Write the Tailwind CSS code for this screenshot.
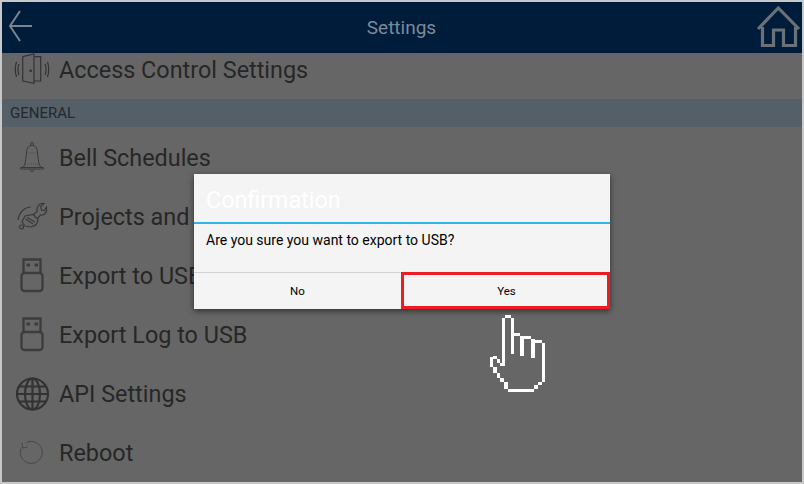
<!DOCTYPE html>
<html lang="en">
<head>
    <meta charset="UTF-8" />
    <title>Settings</title>
    <script src="https://cdn.jsdelivr.net/npm/@tailwindcss/browser@4"></script>
</head>
<body class="bg-[#c8c8c8] font-['Roboto',sans-serif]">
<div class="relative w-[804px] h-[484px] p-[2px] overflow-hidden">
    <div class="flex flex-col h-[480px] w-[800px] bg-[#666666] overflow-hidden">

        <!-- Top bar -->
        <header class="flex items-center justify-between h-[51px] shrink-0 bg-[#001c3b]">
            <svg class="w-10 h-[51px]" viewBox="0 0 40 51" fill="none" stroke="#7a8590" stroke-width="2">
                <path d="M18 9 L8 24 L18 39 M8 24 H30" />
            </svg>
            <span class="text-[19px] text-[#7d8a98] ml-[7px] pt-[2px]">Settings</span>
            <svg class="w-[48px] h-[51px]" viewBox="752 2 48 51" fill="none" stroke="#6b7178" stroke-width="3.200">
                <path d="M756 29 L776.300 8 L797 29 M760.500 27 V45.500 H771.500 V30 H781.500 V45.500 H793.500 V27" />
            </svg>
        </header>

        <!-- Settings list -->
        <div class="flex items-center h-[46px] pb-3 shrink-0 text-[23.400px] text-[#272727]">
            <div class="w-[57px] pl-[10px] flex">
                <svg class="w-10 h-10" viewBox="0 0 40 40" fill="none" stroke="#333" stroke-width="1.200">
                    <path d="M10.700 6.700 L22 4 V33.300 L10.700 31 Z M22 6.700 H28.700 V31 H22 M7 14 Q4.800 19 7 25 M4.500 12 Q2 19 4.500 27 M33 14 Q35.200 19 33 25 M35.500 12 Q38 19 35.500 27" />
                    <circle cx="18.700" cy="20.700" r=".7" fill="#333" />
                </svg>
            </div>
            <span class="pt-[2px]">Access Control Settings</span>
        </div>

        <div class="flex items-center h-[28px] shrink-0 pl-2 bg-[#555f68] text-[15px] text-[#24282c]">GENERAL</div>

        <div class="flex flex-col pt-px text-[23.400px] text-[#272727]">
            <div class="flex items-center h-[59px]">
                <div class="w-[57px] pl-[10px] flex">
                    <svg class="w-10 h-10" viewBox="0 0 40 40" fill="none" stroke="#3a3a3a" stroke-width="1">
                        <path d="M11.500 29 C14 25 14 19 14.500 14 C15 9.500 17 7.500 20 7.500 C23 7.500 25 9.500 25.500 14 C26 19 26 25 28.500 29" />
                        <path d="M8.500 29.500 H31.500 V31 H8.500 Z M18 31.500 A2 2 0 0 0 22 31.500" />
                        <circle cx="20" cy="6" r="1.500" />
                        <path d="M14.500 15 H25.500 M13 26 H27" stroke-width=".5" stroke-dasharray="1 1" />
                    </svg>
                </div>
                <span class="pt-[2px]">Bell Schedules</span>
            </div>
            <div class="flex items-center h-[59px]">
                <div class="w-[57px] pl-[10px] flex">
                    <svg class="w-10 h-10" viewBox="0 0 40 40" fill="none" stroke="#3a3a3a" stroke-width="1.200">
                        <path d="M21 18 L25 14.500 C24 10 27 6 32 6.500 L28.500 10 L29.500 13 L32.500 13.500 L34.500 10 C35.500 15 33 18.500 28.500 18 L25 22" />
                        <path d="M13 19 L21 17.500 L26 22.500 C26 26 23 29 19 30 L13 29 L10 25 Z M13.500 22 L21 27 M15 20.500 L23 25" />
                        <circle cx="9.500" cy="30" r="2" />
                        <path d="M6 23 C7 15 13 10 19 10" />
                    </svg>
                </div>
                <span class="pt-[2px]">Projects and</span>
            </div>
            <div class="flex items-center h-[59px]">
                <div class="w-[57px] pl-[10px] flex">
                    <svg class="w-10 h-10" viewBox="0 0 40 40" fill="none" stroke="#3c3c3c" stroke-width="2.300">
                        <path d="M11.500 17 V3.500 H28.500 V17" />
                        <rect x="9.500" y="17" width="21" height="18" rx="3" />
                        <path d="M14.500 9 H18 M22.500 9 H26" stroke-width="3" />
                    </svg>
                </div>
                <span class="pt-[2px]">Export to USB</span>
            </div>
            <div class="flex items-center h-[59px]">
                <div class="w-[57px] pl-[10px] flex">
                    <svg class="w-10 h-10" viewBox="0 0 40 40" fill="none" stroke="#3c3c3c" stroke-width="2.300">
                        <path d="M11.500 17 V3.500 H28.500 V17" />
                        <rect x="9.500" y="17" width="21" height="18" rx="3" />
                        <path d="M14.500 9 H18 M22.500 9 H26" stroke-width="3" />
                    </svg>
                </div>
                <span class="pt-[2px]">Export Log to USB</span>
            </div>
            <div class="flex items-center h-[59px]">
                <div class="w-[57px] pl-[10px] flex">
                    <svg class="w-10 h-10" viewBox="0 0 40 40" fill="none" stroke="#333" stroke-width="2.200">
                        <circle cx="20.500" cy="20" r="15.500" />
                        <ellipse cx="20.500" cy="20" rx="7.500" ry="15.500" />
                        <path d="M20.500 4.500 V35.500 M5 20 H36 M7 12.500 H34 M7 27.500 H34" />
                    </svg>
                </div>
                <span class="pt-[2px]">API Settings</span>
            </div>
            <div class="flex items-center h-[59px]">
                <div class="w-[57px] pl-[10px] flex">
                    <svg class="w-10 h-10" viewBox="0 0 40 40" fill="none" stroke="#444" stroke-width=".9">
                        <path d="M14.500 9.500 A11 11 0 1 1 9 15.500 M10 9.500 L10.500 15 L15.500 14" />
                    </svg>
                </div>
                <span class="pt-[2px]">Reboot</span>
            </div>
        </div>
    </div>

    <!-- Confirmation dialog -->
    <div class="absolute left-[194px] top-[174px] w-[416px] h-[135px] flex flex-col bg-[#f4f4f4] shadow-[0_2px_6px_rgba(0,0,0,0.55)]">
        <div class="flex items-center h-[50px] pl-3 pt-[3px] text-[23.300px] leading-[30px] text-white border-b-2 border-[#33b5e5]">Confirmation</div>
        <div class="h-[48px] pl-3 pt-[6px] text-[14px] text-black">Are you sure you want to export to USB?</div>
        <div class="relative flex flex-1 pt-[2px] border-t border-[#d2d2d2] text-[11.500px] text-black">
            <div class="flex-1 flex items-center justify-center pr-[2px]">No</div>
            <div class="flex-1 flex items-center justify-center">Yes</div>
            <div class="absolute left-[207px] top-[-1px] right-0 bottom-0 border-[3px] border-[#ed1c24]"></div>
        </div>
    </div>

    <!-- Hand cursor -->
    <svg class="absolute left-0 top-0 w-[804px] h-[484px] pointer-events-none" viewBox="0 0 804 484" fill="#ffffff" shape-rendering="crispEdges">
        <path d="M505 315 H511 V318 H505 Z M502 318 H505 V366 H502 Z M511 318 H514 V354 H511 Z M514 333 H520 V336 H514 Z M520 336 H524 V356 H520 Z M524 336 H531 V339 H524 Z M531 339 H535 V358 H531 Z M535 340 H542 V343 H535 Z M542 343 H545 V382 H542 Z M538 382 H542 V385 H538 Z M534 385 H538 V389 H534 Z M508 389 H534 V392 H508 Z M504 382 H508 V389 H504 Z M500 378 H504 V382 H500 Z M497 373 H500 V378 H497 Z M493 367 H497 V373 H493 Z M490 357 H493 V367 H490 Z M493 356 H497 V359 H493 Z M497 359 H500 V363 H497 Z M500 363 H503 V366 H500 Z" />
    </svg>
</div>
</body>
</html>
